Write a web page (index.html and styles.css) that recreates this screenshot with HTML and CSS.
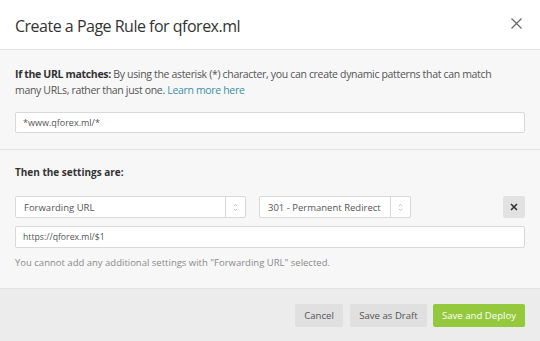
FILE: index.html
```html
<!DOCTYPE html>
<html>
<head>
<meta charset="utf-8">
<link rel="stylesheet" href="styles.css">
</head>
<body>
<div class="dialog">
  <div class="header">
    <h1 class="title">Create a Page Rule for qforex.ml</h1>
    <span class="close" aria-label="Close">
      <svg width="11" height="11" viewBox="0 0 11 11"><path d="M0.5 0.5L10.5 10.5M10.5 0.5L0.5 10.5" stroke="#6b6b6b" stroke-width="1.3" fill="none"/></svg>
    </span>
  </div>
  <div class="section">
    <p class="desc"><b>If the URL matches:</b> By using the asterisk (*) character, you can create dynamic patterns that can match many URLs, rather than just one. <a class="link">Learn more here</a></p>
    <div class="input">*www.qforex.ml/*</div>
  </div>
  <div class="section section2">
    <p class="heading">Then the settings are:</p>
    <div class="row">
      <div class="select sel1"><span class="val">Forwarding URL</span><span class="arrow"><svg width="5" height="9" viewBox="0 0 5 9"><path d="M0.8 3.2L2.5 1.5L4.2 3.2M0.8 5.8L2.5 7.5L4.2 5.8" stroke="#b5b5b5" stroke-width="0.8" fill="none"/></svg></span></div>
      <div class="select sel2"><span class="val">301 - Permanent Redirect</span><span class="arrow"><svg width="5" height="9" viewBox="0 0 5 9"><path d="M0.8 3.2L2.5 1.5L4.2 3.2M0.8 5.8L2.5 7.5L4.2 5.8" stroke="#b5b5b5" stroke-width="0.8" fill="none"/></svg></span></div>
      <span class="spacer"></span>
      <span class="remove"><svg width="8" height="8" viewBox="0 0 8 8"><path d="M1 1L7 7M7 1L1 7" stroke="#333" stroke-width="1.6" fill="none"/></svg></span>
    </div>
    <div class="input input2">https://qforex.ml/$1</div>
    <p class="help">You cannot add any additional settings with "Forwarding URL" selected.</p>
  </div>
  <div class="footer">
    <span class="btn cancel">Cancel</span>
    <span class="btn draft">Save as Draft</span>
    <span class="btn primary">Save and Deploy</span>
  </div>
</div>
</body>
</html>
```
FILE: styles.css
```css
* { box-sizing: border-box; }
html, body { margin: 0; padding: 0; }
body {
  width: 540px;
  height: 341px;
  overflow: hidden;
  font-family: "Open Sans", "Liberation Sans", sans-serif;
  color: #404040;
  background: #f7f7f7;
}
.dialog { display: flex; flex-direction: column; height: 341px; }
.header {
  height: 50px;
  background: #fff;
  border-bottom: 1px solid #e3e3e3;
  display: flex;
  align-items: center;
  justify-content: space-between;
  padding: 2px 18px 0 15px;
}
.title {
  margin: 0;
  font-size: 16px;
  font-weight: 400;
  color: #333;
  letter-spacing: -0.5px;
}
.close { display: flex; margin-top: -4px; }
.section {
  padding: 16px 15px 16px 15px;
  border-bottom: 1px solid #e3e3e3;
  background: #f7f7f7;
}
.desc {
  margin: 0 0 14px 0;
  max-width: 482px;
  font-size: 10.5px;
  letter-spacing: -0.33px;
  line-height: 16px;
  color: #555;
}
.desc b { color: #333; font-weight: 700; }
.link { color: #3c8fa8; }
.input {
  height: 21px;
  background: #fff;
  border: 1px solid #d9d9d9;
  border-radius: 2px;
  font-size: 9px;
  color: #555;
  padding: 0 7px;
  display: flex;
  align-items: center;
}
.section2 { padding-top: 14px; padding-bottom: 17px; }
.heading {
  margin: 0 0 16px 0;
  font-size: 10px;
  font-weight: 700;
  line-height: 16px;
  color: #333;
}
.row { display: flex; align-items: center; height: 22px; }
.select {
  height: 22px;
  background: #fff;
  border: 1px solid #d9d9d9;
  border-radius: 2px;
  display: flex;
  align-items: center;
  font-size: 9.5px;
  color: #555;
}
.select .val { flex: 1; padding-left: 8px; white-space: nowrap; }
.select .arrow {
  width: 20px;
  height: 100%;
  border-left: 1px solid #d9d9d9;
  display: flex;
  align-items: center;
  justify-content: center;
}
.sel1 { width: 231px; }
.sel2 { width: 152px; margin-left: 13px; }
.spacer { flex: 1; }
.remove {
  width: 22px;
  height: 22px;
  background: #e2e2e2;
  border-radius: 2px;
  display: flex;
  align-items: center;
  justify-content: center;
}
.input2 { margin-top: 8px; height: 22px; font-size: 8.7px; }
.help {
  margin: 7px 0 0 0;
  font-size: 9.5px;
  line-height: 16px;
  color: #8a8a8a;
}
.footer {
  flex: 1;
  background: #ececec;
  display: flex;
  justify-content: flex-end;
  align-items: flex-start;
  padding: 15px 15px 0 0;
}
.btn {
  height: 23px;
  background: #e0e0e0;
  border-radius: 2px;
  font-size: 9.6px;
  color: #555;
  display: flex;
  align-items: center;
  justify-content: center;
  white-space: nowrap;
}
.btn.cancel { width: 48px; }
.btn.draft { width: 77px; margin-left: 7px; }
.btn.primary {
  width: 92px;
  margin-left: 6px;
  background: #94c83d;
  color: #fff;
}
```
